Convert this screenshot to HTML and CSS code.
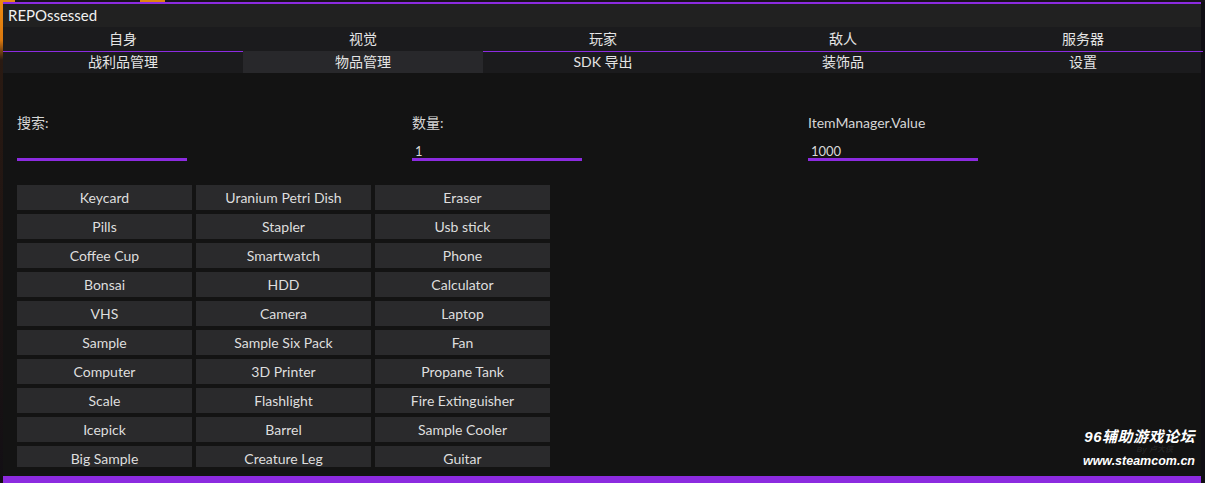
FILE: index.html
```html
<!DOCTYPE html>
<html lang="zh-CN">
<head>
    <meta charset="UTF-8">
    <title>REPOssessed</title>
    <link rel="stylesheet" href="styles.css">
</head>
<body>

    <div class="window">
        <!-- Title bar -->
        <div class="title">REPOssessed</div>

        <!-- Main tabs -->
        <div class="tabs">
            <div class="tab">自身</div>
            <div class="tab">视觉</div>
            <div class="tab">玩家</div>
            <div class="tab">敌人</div>
            <div class="tab">服务器</div>
        </div>

        <!-- Sub tabs -->
        <div class="tabs sub">
            <div class="tab">战利品管理</div>
            <div class="tab active">物品管理</div>
            <div class="tab">SDK 导出</div>
            <div class="tab">装饰品</div>
            <div class="tab">设置</div>
        </div>

        <div class="content">
            <div class="fields">
                <div class="field">
                    <div class="label">搜索:</div>
                    <div class="input"></div>
                </div>
                <div class="field">
                    <div class="label">数量:</div>
                    <div class="input">1</div>
                </div>
                <div class="field">
                    <div class="label">ItemManager.Value</div>
                    <div class="input">1000</div>
                </div>
            </div>

            <div class="items" id="items"></div>
        </div>

        <div class="bottom"></div>
    </div>

    <!-- Forum stamp -->
    <div class="stamp">
        <div class="stamp-name">96辅助游戏论坛</div>
        <div class="stamp-by">By 卢大侠</div>
        <div class="stamp-url">www.steamcom.cn</div>
    </div>

    <script>
        const items = [
            "Keycard", "Uranium Petri Dish", "Eraser",
            "Pills", "Stapler", "Usb stick",
            "Coffee Cup", "Smartwatch", "Phone",
            "Bonsai", "HDD", "Calculator",
            "VHS", "Camera", "Laptop",
            "Sample", "Sample Six Pack", "Fan",
            "Computer", "3D Printer", "Propane Tank",
            "Scale", "Flashlight", "Fire Extinguisher",
            "Icepick", "Barrel", "Sample Cooler",
            "Big Sample", "Creature Leg", "Guitar"
        ];

        const list = document.getElementById('items');
        items.forEach(name => {
            const button = document.createElement('button');
            button.className = 'item';
            button.innerText = name;
            list.appendChild(button);
        });
    </script>
</body>
</html>
```

FILE: styles.css
```css
* {
    box-sizing: border-box;
}

body {
    margin: 0;
    padding: 2px 4px 0 3px;
    height: 483px;
    overflow: hidden;
    /* game scene peeking out on the left edge */
    background:
        linear-gradient(to bottom, #ee8c12 0, #d9780e 40px, #2a1a12 60px, #120f14 100%) left top / 3px 100% no-repeat,
        linear-gradient(to right, #e88a14 0, #e88a14 15px, #17131a 15px, #17131a 140px, #e0840f 140px, #e0840f 165px, #17131a 165px) left top / 100% 2px no-repeat,
        #100e14;
    font-family: Lato, "Noto Sans CJK SC", sans-serif;
    color: #e4e4e4;
}

.window {
    display: flex;
    flex-direction: column;
    height: 481px;
    border-top: 2px solid #8c2be0;
    background-color: #131313;
}

.title {
    height: 23px;
    line-height: 22px;
    padding-left: 5px;
    font-size: 15px;
    background-color: #212121;
    color: #f0f0f0;
}

/* Tab rows */
.tabs {
    display: grid;
    grid-template-columns: repeat(5, 240px);
    height: 24px;
    background-color: #1b1b1d;
}

.tab {
    text-align: center;
    font-size: 14px;
    line-height: 24px;
}

.sub {
    height: 22px;
}

.sub .tab {
    line-height: 20px;
    border-top: 1px solid #8c2be0;
}

.sub .tab.active {
    background-color: #28282b;
    border-top-color: #28282b;
}

/* Content */
.content {
    flex: 1;
    overflow: hidden;
    padding: 0 0 0 14px;
    margin-bottom: 9px;
}

.fields {
    display: grid;
    grid-template-columns: 395px 396px 396px;
    margin-top: 41px;
}

.label {
    font-size: 14px;
    line-height: 18px;
    color: #d6d6d6;
}

.input {
    width: 170px;
    height: 23px;
    margin-top: 6px;
    padding: 6px 0 0 3px;
    font-size: 13px;
    line-height: 14px;
    color: #d8d8d8;
    border-bottom: 3px solid #8c2be0;
}

.items {
    display: grid;
    grid-template-columns: repeat(3, 175px);
    grid-auto-rows: 25px;
    gap: 4px;
    margin-top: 24px;
}

.item {
    border: none;
    padding: 0;
    background-color: #2a2a2c;
    color: #dedede;
    font-family: Lato, sans-serif;
    font-size: 14px;
    cursor: pointer;
}

.item:hover {
    background-color: #343438;
}

.bottom {
    height: 7px;
    background-color: #8c2be0;
}

/* Forum stamp */
.stamp {
    position: absolute;
    right: 10px;
    bottom: 15px;
    text-align: right;
    color: #ffffff;
    font-family: "Liberation Sans", "Noto Sans CJK SC", sans-serif;
    font-weight: bold;
    font-style: italic;
}

.stamp-name {
    font-size: 15px;
    line-height: 18px;
    letter-spacing: 0.5px;
}

.stamp-by {
    font-size: 8px;
    line-height: 8px;
    margin-right: 22px;
    color: rgba(255, 255, 255, 0.08);
}

.stamp-url {
    font-size: 12.5px;
    line-height: 14px;
}
```
